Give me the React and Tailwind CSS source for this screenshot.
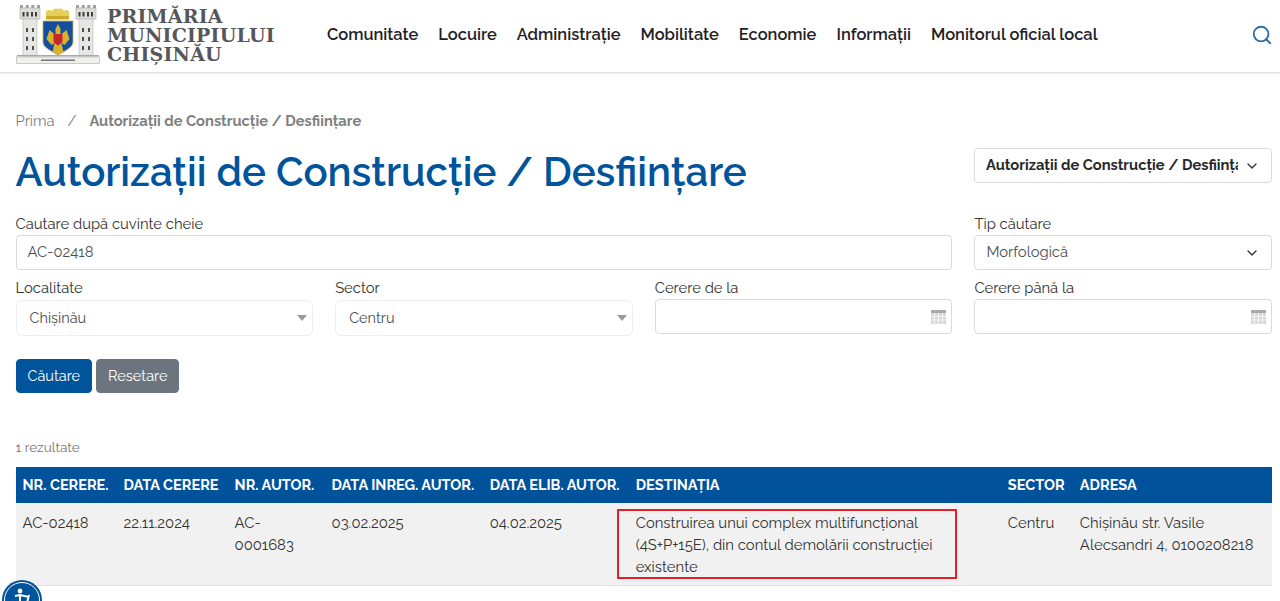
import React from 'react';
import { ChevronDown, Search } from 'lucide-react';

const navItems = ['Comunitate', 'Locuire', 'Administrație', 'Mobilitate', 'Economie', 'Informații', 'Monitorul oficial local'];

const columns = [
  { label: 'NR. CERERE.', width: 'w-[101px]' },
  { label: 'DATA CERERE', width: 'w-[111px]' },
  { label: 'NR. AUTOR.', width: 'w-[97px]' },
  { label: 'DATA INREG. AUTOR.', width: 'w-[158px]' },
  { label: 'DATA ELIB. AUTOR.', width: 'w-[146px]' },
  { label: 'DESTINAȚIA', width: 'w-[372px]' },
  { label: 'SECTOR', width: 'w-[72px]' },
  { label: 'ADRESA', width: 'w-[199px]' },
];

// Tower of the coat of arms, drawn at its own origin
const Tower = ({ x }) => (
  <g transform={`translate(${x} 0)`}>
    <rect x="0" y="4" width="20" height="11" fill="#dcdcd9" stroke="#a8a8a5" strokeWidth="0.6" />
    <rect x="3" y="15" width="14" height="37" fill="#e6e6e3" stroke="#b8b8b5" strokeWidth="0.6" />
    <path d="M0 1h3v3H0zM5.700 1h3v3h-3zM11.300 1h3v3h-3zM17 1h3v3h-3z" fill="#a0a09d" />
    <path d="M2.500 8h2v4.500h-2zM6.500 8h2v4.500h-2zM11 8h2v4.500h-2zM15 8h2v4.500h-2z" fill="#3f3f3f" />
    <path d="M6 24h2v4H6zM12 24h2v4h-2zM6 33h2v4H6zM12 33h2v4h-2zM6 42h2v4H6zM12 42h2v4h-2z" fill="#4f4f4f" />
  </g>
);

const Logo = () => (
  <svg width="84" height="60" viewBox="0 0 84 60" className="shrink-0 mb-[5px]">
    <Tower x={4} />
    <Tower x={60} />
    <rect x="1" y="51" width="82" height="1.5" fill="#a9a9a6" />
    <rect x="0.5" y="53" width="83" height="6.5" fill="#f0f0ed" stroke="#b5b5b2" strokeWidth="0.7" />
    <rect x="25" y="55.5" width="34" height="1.5" fill="#77777a" />
    {/* crown */}
    <path d="M30 8c2-3 4-2 6-1 2-3 4-3 6-2 2-1 4-1 6 2 2-1 4-2 5 1v7H30z" fill="#e6cf58" />
    <rect x="30" y="12" width="23" height="3.5" fill="#c9ab2e" />
    {/* shield */}
    <path d="M27 17h30v21c0 6-9 9-15 13-6-4-15-7-15-13z" fill="#134f9f" stroke="#cdb13a" strokeWidth="0.8" />
    <path d="M42 20l2.500 5v6l6-5 3 9-5 6-3-2 2 9-5.500 3-5.500-3 2-9-3 2-5-6 3-9 6 5v-6z" fill="#d8b22f" />
    <path d="M37.500 30h9v7c0 2-2.500 3-4.500 4.500-2-1.500-4.500-2.500-4.500-4.500z" fill="#c4262e" />
  </svg>
);

// Calendar glyph at the right of the date inputs
const CalendarIcon = () => (
  <svg width="15" height="14" viewBox="0 0 15 14" className="absolute right-[5px] top-[10px]">
    <rect x="0" y="0" width="15" height="14" fill="#d8d8d8" />
    <rect x="0" y="0" width="15" height="3" fill="#a9a9a9" />
    <path d="M3.500 3v11M7.500 3v11M11.500 3v11M0 6.500h15M0 10h15" stroke="#f4f4f4" strokeWidth="1" />
  </svg>
);

const Field = ({ label, className = '', children }) => (
  <div className={className}>
    <label className="block text-[14.8px] leading-[22px] text-[#333]">{label}</label>
    {children}
  </div>
);

const BootSelect = ({ value }) => (
  <div className="h-[35px] flex items-center justify-between px-[11px] bg-white border border-[#d9dcdf] rounded-[4px] text-[14.8px] text-[#4a4f54]">
    <span>{value}</span>
    <ChevronDown size={16} strokeWidth={2} className="text-[#333]" />
  </div>
);

const ChosenSelect = ({ value }) => (
  <div className="h-[36px] mt-[1px] flex items-center justify-between pl-[13px] pr-[5px] bg-white border border-[#eceeef] rounded-[6px] text-[14.5px] text-[#4a4f54]">
    <span>{value}</span>
    <span className="w-0 h-0 border-x-[5px] border-x-transparent border-t-[6px] border-t-[#999]" />
  </div>
);

const DateInput = () => (
  <div className="relative h-[35px] bg-white border border-[#d9dcdf] rounded-[4px]">
    <CalendarIcon />
  </div>
);

export default function App() {
  return (
    <div className="relative h-[601px] overflow-hidden bg-white font-['Raleway','Lato','Liberation_Sans',sans-serif] text-[#333]">
      <header className="h-[73px] flex items-center pl-[16px] pr-[7px] border-b border-[#e3e3e3] shadow-[0_1px_3px_rgba(0,0,0,0.08)]">
        <Logo />
        <div className="ml-[7px] mb-[2px] w-[220px] font-['DejaVu_Serif',serif] font-bold text-[19px] leading-[19px] tracking-[0.2px] text-[#55575a]">
          <div>PRIMĂRIA</div>
          <div>MUNICIPIULUI</div>
          <div>CHIȘINĂU</div>
        </div>
        <nav className="mb-[2px] flex gap-[20px] text-[16.48px] font-semibold text-[#1f2225]">
          {navItems.map((item) => (
            <a key={item} href="#">{item}</a>
          ))}
        </nav>
        <Search size={22} strokeWidth={2} className="ml-auto mb-[2px] text-[#2f6da8]" />
      </header>

      <main className="pl-[15.5px] pr-[8px]">
        <div className="mt-[37px] flex items-center gap-[13px] text-[14.7px] leading-[22px] text-[#808080]">
          <span>Prima</span>
          <span>/</span>
          <span className="font-bold">Autorizații de Construcție / Desființare</span>
        </div>

        <div className="mt-[12px] flex items-start justify-between">
          <h1 className="text-[40.2px] leading-[56px] font-semibold text-[#00549b]">Autorizații de Construcție / Desființare</h1>
          <div className="w-[298px] mt-[4px] h-[35px] flex items-center justify-between pl-[11px] pr-[11px] border border-[#d9dcdf] rounded-[4px]">
            <span className="w-[252px] overflow-hidden whitespace-nowrap text-[14.7px] font-bold text-[#26292c]">Autorizații de Construcție / Desființare</span>
            <ChevronDown size={16} strokeWidth={2} className="text-[#333]" />
          </div>
        </div>

        <div className="mt-[13px] grid grid-cols-4 gap-x-[22px] gap-y-[7px]">
          <Field label="Cautare după cuvinte cheie" className="col-span-3">
            <div className="h-[35px] flex items-center px-[11px] bg-white border border-[#d9dcdf] rounded-[4px] text-[14.8px] text-[#4a4f54]">AC-02418</div>
          </Field>
          <Field label="Tip căutare">
            <BootSelect value="Morfologică" />
          </Field>
          <Field label="Localitate">
            <ChosenSelect value="Chișinău" />
          </Field>
          <Field label="Sector">
            <ChosenSelect value="Centru" />
          </Field>
          <Field label="Cerere de la">
            <DateInput />
          </Field>
          <Field label="Cerere până la">
            <DateInput />
          </Field>
        </div>

        <div className="mt-[23px] flex gap-[4px] text-[14.5px]">
          <button className="h-[34px] px-[11px] bg-[#00549b] border border-[#00549b] rounded-[4px] text-white">Căutare</button>
          <button className="h-[34px] px-[11px] bg-[#6c757d] border border-[#6c757d] rounded-[4px] text-white">Resetare</button>
        </div>

        <p className="mt-[44px] text-[13.5px] leading-[20px] text-[#777]">1 rezultate</p>

        <table className="mt-[10px] w-full table-fixed border-collapse text-[14.85px]">
          <thead>
            <tr className="h-[36px] bg-[#00539b] text-white text-[14.5px]">
              {columns.map((col) => (
                <th key={col.label} className={`${col.width} pl-[7px] text-left font-bold whitespace-nowrap`}>{col.label}</th>
              ))}
            </tr>
          </thead>
          <tbody>
            <tr className="h-[82px] align-top bg-[#f1f1f1] border-b border-[#e2e2e2] leading-[22px] text-[#333]">
              <td className="pl-[7px] pt-[9px]">AC-02418</td>
              <td className="pl-[7px] pt-[9px]">22.11.2024</td>
              <td className="pl-[7px] pt-[9px] pr-[8px]">AC-<br />0001683</td>
              <td className="pl-[7px] pt-[9px]">03.02.2025</td>
              <td className="pl-[7px] pt-[9px]">04.02.2025</td>
              <td className="relative pl-[7px] pt-[9px] pr-[18px]">
                Construirea unui complex multifuncțional (4S+P+15E), din contul demolării construcției existente
                <div className="absolute left-[-12px] top-[6px] w-[340px] h-[70px] border-2 border-[#e3202a]" />
              </td>
              <td className="pl-[7px] pt-[9px]">Centru</td>
              <td className="pl-[7px] pt-[9px] pr-[12px]">Chișinău str. Vasile Alecsandri 4, 0100208218</td>
            </tr>
          </tbody>
        </table>
      </main>

      {/* accessibility widget, cut off by the window */}
      <div className="absolute left-[2px] top-[580px] w-[40px] h-[40px] rounded-full bg-[#00549b] flex items-start justify-center">
        <div className="absolute inset-[2px] rounded-full border border-white" />
        <svg width="22" height="22" viewBox="0 0 22 22" className="mt-[7px]">
          <circle cx="9" cy="4" r="2.4" fill="#fff" />
          <path d="M4 9l5-1 9 2M9 8v8M18 8l-3 12" stroke="#fff" strokeWidth="2" fill="none" />
        </svg>
      </div>
    </div>
  );
}
